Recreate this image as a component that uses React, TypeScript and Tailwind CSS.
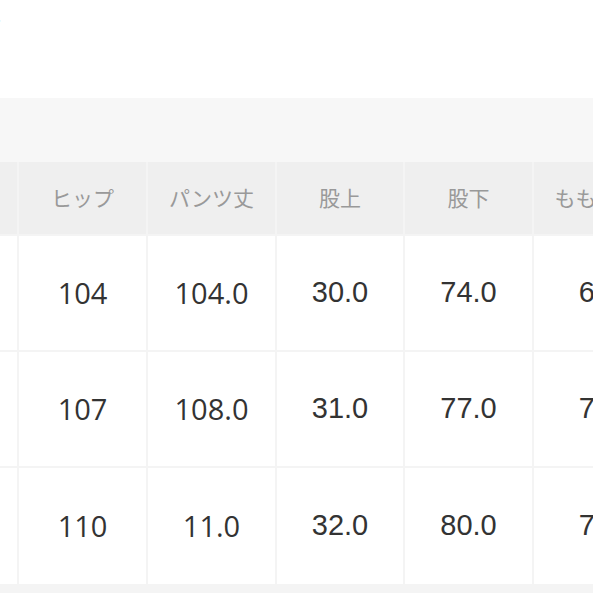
const headers = ['', 'ヒップ', 'パンツ丈', '股上', '股下', 'ももまわり'];

const rows: string[][] = [
  ['', '104', '104.0', '30.0', '74.0', '65.0'],
  ['', '107', '108.0', '31.0', '77.0', '70.0'],
  ['', '110', '11.0', '32.0', '80.0', '73.0'],
];

const jp = "font-['Noto_Sans_CJK_JP','Noto_Sans',sans-serif]";

function numFont(i: number) {
  // the first two value columns are set in a rounder face than the rest
  return i <= 2 ? "font-['Open_Sans',sans-serif]" : "font-['Liberation_Sans',Arial,sans-serif]";
}

export default function App() {
  return (
    <div className="w-[593px] h-[593px] overflow-hidden bg-white">
      <div className="h-[98px] bg-white pt-[10px]">
        <span className={`${jp} block -ml-[17px] text-[20px] leading-none text-[#333]`}>ト</span>
      </div>
      <div className="h-[64px] bg-[#f7f7f7]" />
      <div className="grid grid-cols-[17px_127px_127px_126px_127px_146px] grid-rows-[72px_114px_114px_116px] gap-[2px] bg-[#f4f4f4] w-max pb-[9px]">
        {headers.map((h, i) => (
          <div
            key={'h' + i}
            className={`${jp} flex items-center justify-center bg-[#efefef] text-[21px] text-[#999] whitespace-nowrap overflow-hidden`}
          >
            {h}
          </div>
        ))}
        {rows.map((r, ri) =>
          r.map((v, i) => (
            <div
              key={ri + '-' + i}
              className={`${numFont(i)} flex items-center justify-center bg-white text-[29px] text-[#333] whitespace-nowrap overflow-hidden`}
            >
              {v}
            </div>
          )),
        )}
      </div>
    </div>
  );
}
